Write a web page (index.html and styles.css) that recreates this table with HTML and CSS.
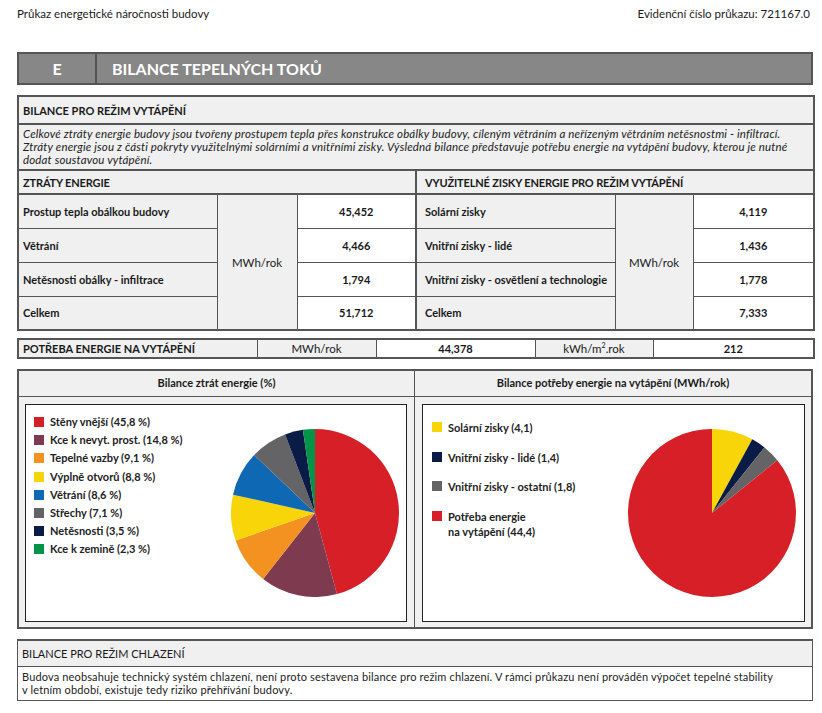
FILE: index.html
```html
<!DOCTYPE html>
<html lang="cs">
<head>
<meta charset="utf-8">
<title>Bilance tepelných toků</title>
<link rel="stylesheet" href="styles.css">
</head>
<body>
<div class="page">
  <div class="top">
    <span>Průkaz energetické náročnosti budovy</span>
    <span>Evidenční číslo průkazu: 721167.0</span>
  </div>

  <div class="titlebar">
    <div class="tb-letter">E</div>
    <div class="tb-text">BILANCE TEPELNÝCH TOKŮ</div>
  </div>

  <table class="heat">
    <colgroup>
      <col class="c1"><col class="c2"><col class="c3"><col class="c4"><col class="c5"><col class="c6">
    </colgroup>
    <tr class="r-head"><td colspan="6" class="sechead">BILANCE PRO REŽIM VYTÁPĚNÍ</td></tr>
    <tr class="r-desc"><td colspan="6" class="desc">Celkové ztráty energie budovy jsou tvořeny prostupem tepla přes konstrukce obálky budovy, cíleným větráním a neřízeným větráním netěsnostmi - infiltrací.<br>Ztráty energie jsou z části pokryty využitelnými solárními a vnitřními zisky. Výsledná bilance představuje potřebu energie na vytápění budovy, kterou je nutné<br>dodat soustavou vytápění.</td></tr>
    <tr class="r-sub"><td colspan="3" class="subhead">ZTRÁTY ENERGIE</td><td colspan="3" class="subhead split">VYUŽITELNÉ ZISKY ENERGIE PRO REŽIM VYTÁPĚNÍ</td></tr>
    <tr class="r-data first">
      <td class="lbl">Prostup tepla obálkou budovy</td>
      <td class="unit" rowspan="4">MWh/rok</td>
      <td class="val">45,452</td>
      <td class="lbl split">Solární zisky</td>
      <td class="unit" rowspan="4">MWh/rok</td>
      <td class="val">4,119</td>
    </tr>
    <tr class="r-data">
      <td class="lbl">Větrání</td>
      <td class="val">4,466</td>
      <td class="lbl split">Vnitřní zisky - lidé</td>
      <td class="val">1,436</td>
    </tr>
    <tr class="r-data">
      <td class="lbl">Netěsnosti obálky - infiltrace</td>
      <td class="val">1,794</td>
      <td class="lbl split">Vnitřní zisky - osvětlení a technologie</td>
      <td class="val">1,778</td>
    </tr>
    <tr class="r-data">
      <td class="lbl">Celkem</td>
      <td class="val">51,712</td>
      <td class="lbl split">Celkem</td>
      <td class="val">7,333</td>
    </tr>
  </table>

  <table class="need">
    <colgroup>
      <col class="n1"><col class="n2"><col class="n3"><col class="n4"><col class="n5">
    </colgroup>
    <tr>
      <td class="n-lbl">POTŘEBA ENERGIE NA VYTÁPĚNÍ</td>
      <td class="n-unit">MWh/rok</td>
      <td class="n-val">44,378</td>
      <td class="n-unit">kWh/m<sup>2</sup>.rok</td>
      <td class="n-val">212</td>
    </tr>
  </table>

  <div class="charts">
    <div class="ch-col ch-left">
      <div class="ch-head">Bilance ztrát energie (%)</div>
      <div class="ch-body">
        <div class="chart">
          <ul class="legend legend-loss">
            <li><span class="sw red"></span>Stěny vnější (45,8 %)</li>
            <li><span class="sw maroon"></span>Kce k nevyt. prost. (14,8 %)</li>
            <li><span class="sw orange"></span>Tepelné vazby (9,1 %)</li>
            <li><span class="sw yellow"></span>Výplně otvorů (8,8 %)</li>
            <li><span class="sw blue"></span>Větrání (8,6 %)</li>
            <li><span class="sw gray"></span>Střechy (7,1 %)</li>
            <li><span class="sw navy"></span>Netěsnosti (3,5 %)</li>
            <li><span class="sw green"></span>Kce k zemině (2,3 %)</li>
          </ul>
          <svg class="pie pie-left" width="168" height="168" viewBox="0 0 168 168">
            <path fill="#d71f27" d="M84 84 L84 0 A84 84 0 0 1 105.91 165.09 Z"/>
            <path fill="#7e3a4e" d="M84 84 L105.91 165.09 A84 84 0 0 1 32.10 150.05 Z"/>
            <path fill="#f39121" d="M84 84 L32.10 150.05 A84 84 0 0 1 4.61 111.46 Z"/>
            <path fill="#f8d508" d="M84 84 L4.61 111.46 A84 84 0 0 1 2.02 65.68 Z"/>
            <path fill="#0f68b4" d="M84 84 L2.02 65.68 A84 84 0 0 1 23.17 26.08 Z"/>
            <path fill="#646466" d="M84 84 L23.17 26.08 A84 84 0 0 1 54.06 5.52 Z"/>
            <path fill="#0a1c45" d="M84 84 L54.06 5.52 A84 84 0 0 1 71.90 0.87 Z"/>
            <path fill="#049447" d="M84 84 L71.90 0.87 A84 84 0 0 1 84 0 Z"/>
          </svg>
        </div>
      </div>
    </div>
    <div class="ch-col ch-right">
      <div class="ch-head">Bilance potřeby energie na vytápění (MWh/rok)</div>
      <div class="ch-body">
        <div class="chart">
          <ul class="legend legend-need">
            <li><span class="sw yellow"></span>Solární zisky (4,1)</li>
            <li><span class="sw navy"></span>Vnitřní zisky - lidé (1,4)</li>
            <li><span class="sw gray"></span>Vnitřní zisky - ostatní (1,8)</li>
            <li><span class="sw red"></span>Potřeba energie<br>na vytápění (44,4)</li>
          </ul>
          <svg class="pie pie-right" width="168" height="168" viewBox="0 0 168 168">
            <path fill="#f8d508" d="M84 84 L84 0 A84 84 0 0 1 124.31 10.31 Z"/>
            <path fill="#0a1c45" d="M84 84 L124.31 10.31 A84 84 0 0 1 136.48 18.41 Z"/>
            <path fill="#646466" d="M84 84 L136.48 18.41 A84 84 0 0 1 149.32 31.19 Z"/>
            <path fill="#d71f27" d="M84 84 L149.32 31.19 A84 84 0 1 1 84 0 Z"/>
          </svg>
        </div>
      </div>
    </div>
  </div>

  <div class="cool">
    <div class="cool-head">BILANCE PRO REŽIM CHLAZENÍ</div>
    <div class="cool-text">Budova neobsahuje technický systém chlazení, není proto sestavena bilance pro režim chlazení. V rámci průkazu není prováděn výpočet tepelné stability<br>v letním období, existuje tedy riziko přehřívání budovy.</div>
  </div>
</div>
</body>
</html>
```

FILE: styles.css
```css
* { box-sizing: border-box; }

body {
  margin: 0;
  background: #fff;
  color: #1a1a1a;
  font-family: Lato, "Liberation Sans", sans-serif;
}

.page {
  width: 796px;
  margin: 0 17px;
  padding-top: 7px;
}

.top {
  display: flex;
  justify-content: space-between;
  font-size: 11.5px;
  line-height: 14px;
  height: 14px;
  padding-right: 3px;
}

.titlebar {
  margin-top: 31px;
  display: flex;
  height: 33px;
  border: 2px solid #555;
  background: #878787;
  color: #fff;
  font-weight: bold;
  font-size: 16px;
  line-height: 29px;
}

.tb-letter {
  width: 78px;
  border-right: 2px solid #555;
  text-align: center;
}

.tb-text {
  padding-left: 15px;
}

/* heating table */
.heat {
  margin-top: 10px;
  width: 796px;
  table-layout: fixed;
  border-collapse: collapse;
  border: 2px solid #555;
  font-size: 11px;
}

.c1 { width: 199px; }
.c2 { width: 80px; }
.c3 { width: 119px; }
.c4 { width: 199px; }
.c5 { width: 78px; }
.c6 { width: 121px; }

.heat td {
  padding: 0 4px;
  border: 1px solid #555;
  vertical-align: middle;
}

.sechead {
  background: #eff0ef;
  height: 28px;
  font-weight: bold;
  border-bottom: 2px solid #555 !important;
}

.desc {
  background: #eff0ef;
  height: 46px;
  font-style: italic;
  font-size: 11.5px;
  letter-spacing: 0.15px;
  line-height: 13px;
  padding: 1px 4px 2px 4px !important;
  border-bottom: 2px solid #555 !important;
  color: #222;
}

.subhead {
  background: #eff0ef;
  height: 24px;
  font-weight: bold;
  letter-spacing: -0.15px;
  border-bottom: 2px solid #555 !important;
}

.heat .split {
  border-left: 2px solid #555;
  padding-left: 8px;
}

.r-data td {
  height: 34px;
}

.lbl {
  background: #eff0ef;
  font-weight: bold;
}

.unit {
  background: #eff0ef;
  text-align: center;
  font-size: 11.5px;
}

.val {
  background: #fff;
  text-align: center;
  font-weight: bold;
}

/* need row */
.need {
  margin-top: 7px;
  width: 796px;
  table-layout: fixed;
  border-collapse: collapse;
  border: 2px solid #555;
  font-size: 11px;
}

.n1 { width: 239px; }
.n2 { width: 119px; }
.n3 { width: 159px; }
.n4 { width: 118px; }
.n5 { width: 161px; }

.need td {
  height: 19px;
  padding: 0 4px;
  border: 1px solid #555;
  text-align: center;
}

.need .n-lbl {
  background: #eff0ef;
  text-align: left;
  font-weight: bold;
}

.n-unit {
  background: #eff0ef;
  font-size: 11.5px;
}

.n-val {
  background: #fff;
  font-weight: bold;
}

.need sup {
  font-size: 7px;
  line-height: 0;
}

/* charts */
.charts {
  margin-top: 10px;
  display: flex;
  border: 2px solid #555;
  background: #eff0ef;
}

.ch-col {
  display: flex;
  flex-direction: column;
}

.ch-left {
  width: 396px;
  border-right: 1px solid #555;
}

.ch-right {
  width: 396px;
}

.ch-head {
  height: 26px;
  border-bottom: 1px solid #555;
  text-align: center;
  font-weight: bold;
  font-size: 11px;
  line-height: 24px;
}

.ch-left .ch-body { padding: 7px 7px 5px 6px; }
.ch-right .ch-body { padding: 7px 6px 5px 7px; }

.chart {
  height: 218px;
  background: #fff;
  border: 1px solid #222;
  display: flex;
  justify-content: space-between;
  align-items: flex-start;
}

.pie {
  display: block;
  margin-top: 24px;
}

.pie-left { margin-right: 7px; }
.pie-right { margin-right: 8px; }

.legend {
  list-style: none;
  margin: 0;
  padding: 0;
  font-size: 11px;
  font-weight: bold;
  color: #222;
}

.legend li {
  display: flex;
  align-items: flex-start;
}

.legend-loss {
  padding: 10px 0 0 8px;
}

.legend-loss li {
  height: 18.2px;
  line-height: 14px;
}

.legend-need {
  padding: 15px 0 0 9px;
}

.legend-need li {
  height: 29.5px;
  line-height: 15px;
}

.sw {
  flex: none;
  width: 10px;
  height: 10px;
  margin: 2px 6px 0 0;
}

.red { background: #d71f27; }
.maroon { background: #7e3a4e; }
.orange { background: #f39121; }
.yellow { background: #f8d508; }
.blue { background: #0f68b4; }
.gray { background: #646466; }
.navy { background: #0a1c45; }
.green { background: #049447; }

/* cooling */
.cool {
  margin-top: 10px;
  border: 1px solid #555;
  font-size: 11px;
}

.cool-head {
  height: 28px;
  background: #eff0ef;
  border: 2px solid #555;
  border-width: 2px 1px 1px 1px;
  margin: -1px -1px 0 -1px;
  line-height: 26px;
  padding-left: 4px;
}

.cool-text {
  background: #fff;
  padding: 3px 4px 4px 4px;
  line-height: 13px;
  letter-spacing: 0.15px;
  color: #222;
}
```
